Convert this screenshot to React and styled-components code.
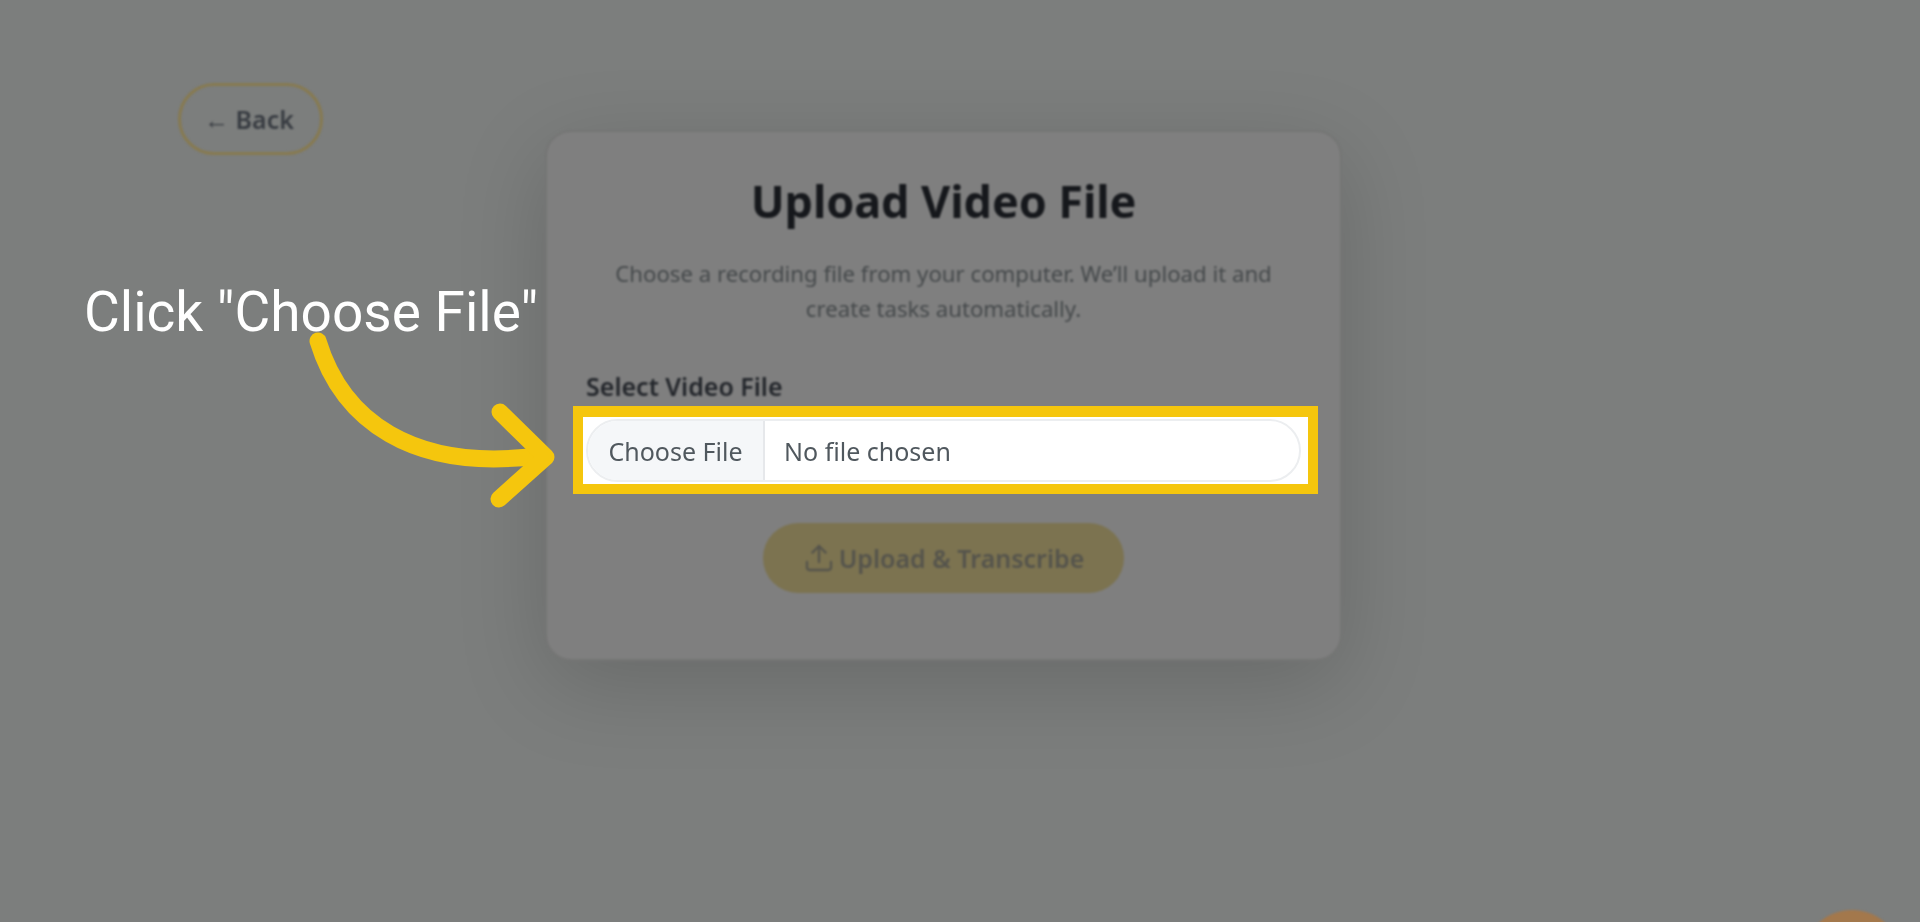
import React from 'react'
import styled, { createGlobalStyle } from 'styled-components'
import { Upload } from 'lucide-react'

const GlobalStyle = createGlobalStyle`
    html, body {
        margin: 0;
        padding: 0;
        background: #7c7e7d;
    }
    * {
        box-sizing: border-box;
    }
`

const App = () => {
    return (
      <Screen>
          <GlobalStyle />
          <BlurredPage>
              <BackButton>← Back</BackButton>
              <Card>
                  <Title>Upload Video File</Title>
                  <Description>
                      Choose a recording file from your computer. We’ll upload it and create tasks automatically.
                  </Description>
                  <FieldLabel>Select Video File</FieldLabel>
                  <FileSlot />
                  <SubmitButton>
                      <Upload size={32} strokeWidth={1.7} />
                      Upload &amp; Transcribe
                  </SubmitButton>
              </Card>
              <ChatBubble />
          </BlurredPage>

          <Caption>Click "Choose File"</Caption>
          <Arrow width="1920" height="922" viewBox="0 0 1920 922" fill="none">
              <path d="M318 341C342 420 412 472 538 456" stroke="#f5c60d" strokeWidth="17" strokeLinecap="round" />
              <path d="M500 412L546 457L499 499" stroke="#f5c60d" strokeWidth="17" strokeLinecap="round" strokeLinejoin="round" />
          </Arrow>
          <Spotlight>
              <FileInput>
                  <ChooseButton>Choose File</ChooseButton>
                  <FileName>No file chosen</FileName>
              </FileInput>
          </Spotlight>
      </Screen>
    )
}

const Screen = styled.div`
    position: relative;
    width: 1920px;
    height: 922px;
    overflow: hidden;
    background: #7c7e7d;
    font-family: "Noto Sans", "Open Sans", Arial, sans-serif;
`
const BlurredPage = styled.div`
    display: flex;
    align-items: flex-start;
    height: 100%;
    padding: 83px 0 0 178px;
    filter: blur(1px);
`
const BackButton = styled.div`
    flex: none;
    width: 145px;
    height: 72px;
    padding-right: 3px;
    display: flex;
    align-items: center;
    justify-content: center;
    border: 3px solid #877a50;
    border-radius: 36px;
    color: #383c42;
    font-size: 25px;
    font-weight: 600;
`
const Card = styled.div`
    flex: none;
    width: 797px;
    height: 531px;
    margin: 47px 0 0 222px;
    padding: 38px 39px 0;
    display: flex;
    flex-direction: column;
    background: #7f7f7f;
    border: 2px solid #747574;
    border-radius: 26px;
    box-shadow: 0 24px 90px rgba(0, 0, 0, 0.16);
`
const Title = styled.h1`
    margin: 0 0 24px;
    text-align: center;
    color: #16181c;
    font-size: 45px;
    line-height: 62px;
    font-weight: 700;
    letter-spacing: -0.1px;
`
const Description = styled.p`
    margin: 0 auto 45px;
    width: 700px;
    text-align: center;
    color: #45494b;
    font-size: 22.2px;
    line-height: 35px;
`
const FieldLabel = styled.div`
    color: #23262b;
    font-size: 25px;
    line-height: 30px;
    font-weight: 600;
    margin-bottom: 16px;
`
const FileSlot = styled.div`
    height: 63px;
    margin-bottom: 43px;
`
const SubmitButton = styled.div`
    align-self: center;
    width: 361px;
    height: 70px;
    display: flex;
    align-items: center;
    justify-content: center;
    gap: 4px;
    background: #7c7350;
    border-radius: 35px;
    color: #55544c;
    font-size: 25px;
    font-weight: 600;
`
const ChatBubble = styled.div`
    position: absolute;
    left: 1802px;
    top: 910px;
    width: 100px;
    height: 100px;
    border-radius: 50%;
    background: #a3784c;
`
const Caption = styled.div`
    position: absolute;
    left: 84px;
    top: 280px;
    color: #ffffff;
    font-family: Roboto, Arial, sans-serif;
    font-size: 55px;
    line-height: 64px;
    white-space: nowrap;
`
const Arrow = styled.svg`
    position: absolute;
    left: 0;
    top: 0;
    pointer-events: none;
`
const Spotlight = styled.div`
    position: absolute;
    left: 573px;
    top: 406px;
    width: 745px;
    height: 88px;
    padding: 2px 7px 2px 3px;
    background: #ffffff;
    border: solid #f5c60d;
    border-width: 11px 10px 10px;
`
const FileInput = styled.div`
    display: flex;
    height: 100%;
    border: 2px solid #eceef0;
    border-radius: 32px;
    overflow: hidden;
    color: #50585e;
    font-size: 25px;
`
const ChooseButton = styled.div`
    flex: none;
    width: 177px;
    display: flex;
    align-items: center;
    justify-content: center;
    background: #f5f7f9;
    border-right: 2px solid #e6e8eb;
`
const FileName = styled.div`
    flex: 1;
    display: flex;
    align-items: center;
    padding-left: 19px;
`

export default App
